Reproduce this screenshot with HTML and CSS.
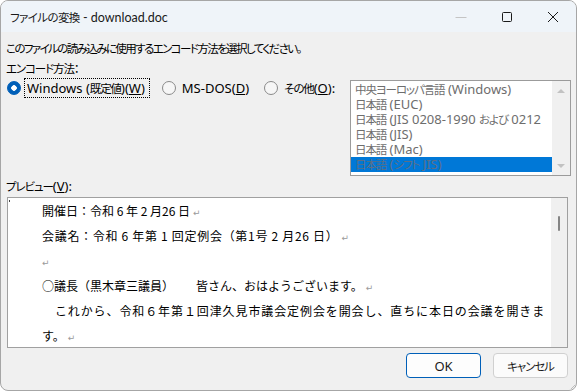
FILE: index.html
```html
<!DOCTYPE html>
<html lang="ja">
<head>
    <meta charset="UTF-8">
    <title>ファイルの変換 - download.doc</title>
    <link rel="stylesheet" href="styles.css">
</head>
<body>
    <div class="window">
        <div class="titlebar">
            <span class="title"><span class="ja">ファイルの変換</span> - download.doc</span>
            <div class="caption">
                <span class="cap-btn">
                    <svg width="12" height="12" viewBox="0 0 12 12"><path d="M0.5 6.5h11" stroke="#c4c4c4" stroke-width="1"/></svg>
                </span>
                <span class="cap-btn">
                    <svg width="12" height="12" viewBox="0 0 12 12"><rect x="1.5" y="1.5" width="9" height="9" rx="1" fill="none" stroke="#1a1a1a" stroke-width="1"/></svg>
                </span>
                <span class="cap-btn">
                    <svg width="12" height="12" viewBox="0 0 12 12"><path d="M1 1L11 11M11 1L1 11" stroke="#1a1a1a" stroke-width="1"/></svg>
                </span>
            </div>
        </div>

        <div class="content">
            <p class="line"><span class="ja intro">このファイルの読み込みに使用するエンコード方法を選択してください。</span></p>
            <p class="line"><span class="ja">エンコード方法：</span></p>

            <div class="encoding-row">
                <div class="radios">
                    <label class="radio">
                        <span class="radio-dot checked"></span>
                        <span class="radio-text focused">Windows (<span class="ja">既定値</span>)(<u>W</u>)</span>
                    </label>
                    <label class="radio">
                        <span class="radio-dot"></span>
                        <span class="radio-text">MS-DOS(<u>D</u>)</span>
                    </label>
                    <label class="radio">
                        <span class="radio-dot"></span>
                        <span class="radio-text"><span class="ja">その他</span>(<u>O</u>):</span>
                    </label>
                </div>

                <div class="listbox">
                    <ul class="list-items">
                        <li><span class="ja">中央ヨーロッパ言語</span> (Windows)</li>
                        <li><span class="ja">日本語</span> (EUC)</li>
                        <li><span class="ja">日本語</span> (JIS 0208-1990 <span class="ja">および</span> 0212</li>
                        <li><span class="ja">日本語</span> (JIS)</li>
                        <li><span class="ja">日本語</span> (Mac)</li>
                        <li class="selected"><span class="ja">日本語</span> (<span class="ja">シフト</span> JIS)</li>
                    </ul>
                    <div class="list-scroll">
                        <span class="arrow up"></span>
                        <span class="arrow down"></span>
                    </div>
                </div>
            </div>

            <p class="line"><span class="ja">プレビュー</span>(<u>V</u>):</p>

            <div class="preview">
                <div class="doc">
                    <span class="cursor-mark"></span>
                    <p class="doc-line">開催日：令和 6 年 2 月26 日<span class="ret">↵</span></p>
                    <p class="doc-line spaced">会議名：令和 6 年第 1 回定例会（第1号 2 月26 日）<span class="ret">↵</span></p>
                    <p class="doc-line"><span class="ret first">↵</span></p>
                    <p class="doc-line">○議長（黒木章三議員）<span class="speech">皆さん、おはようございます。</span><span class="ret">↵</span></p>
                    <p class="doc-line justified">　これから、令和６年第１回津久見市議会定例会を開会し、直ちに本日の会議を開きま</p>
                    <p class="doc-line">す。<span class="ret">↵</span></p>
                </div>
                <div class="doc-scroll">
                    <span class="thumb"></span>
                </div>
            </div>

            <div class="buttons">
                <button class="btn default">OK</button>
                <button class="btn"><span class="ja">キャンセル</span></button>
            </div>
        </div>

        <span class="grip"></span>
    </div>
</body>
</html>
```

FILE: styles.css
```css
body {
    margin: 0;
    background: #ffffff;
    font-family: "Noto Sans", "Noto Sans CJK JP", sans-serif;
    font-size: 13px;
    color: #000;
}

/* Japanese runs of the UI font are narrower than the Noto CJK defaults */
.ja {
    font-family: "Noto Sans CJK JP", sans-serif;
    font-size: 11.5px;
    letter-spacing: -1.1px;
    font-feature-settings: "palt";
}

.ja.intro {
    letter-spacing: -1.6px;
}

.window {
    position: relative;
    width: 577px;
    height: 391px;
    box-sizing: border-box;
    border: 1px solid #a6a6a6;
    border-radius: 8px;
    overflow: hidden;
    background: #f0f0f0;
    display: flex;
    flex-direction: column;
}

/* title bar */
.titlebar {
    height: 31px;
    flex-shrink: 0;
    background: #eff4f9;
    display: flex;
    align-items: center;
}

.title {
    flex: 1;
    padding-left: 9px;
    color: #1a1a1a;
    font-family: "Lato", "Noto Sans CJK JP", sans-serif;
    font-size: 12.5px;
}

.title .ja {
    letter-spacing: -0.6px;
}

.caption {
    display: flex;
    height: 100%;
}

.cap-btn {
    width: 46px;
    display: flex;
    align-items: center;
    justify-content: center;
}

/* dialog content */
.content {
    flex: 1;
    padding: 6px 5px 0 5px;
}

.line {
    margin: 0;
    height: 20px;
    line-height: 20px;
    white-space: nowrap;
}

.encoding-row {
    display: flex;
    justify-content: space-between;
    align-items: flex-start;
}

.radios {
    display: flex;
    align-items: center;
    height: 20px;
    gap: 12px;
    padding-left: 1px;
}

.radio {
    display: flex;
    align-items: center;
    gap: 3px;
}

.radio-dot {
    width: 12px;
    height: 12px;
    border-radius: 50%;
    border: 1px solid #8a8a8a;
    background: #f6f6f6;
}

.radio-dot.checked {
    border-color: #005fb8;
    background: radial-gradient(circle, #ffffff 0 2.5px, #005fb8 3px);
}

.radio-text {
    padding: 1px 2px;
    line-height: 16px;
    border: 1px solid transparent;
}

.radio-text.focused {
    border: 1px dotted #000;
    padding-right: 4px;
}

/* listbox */
.listbox {
    margin-top: 2px;
    width: 221px;
    height: 96px;
    box-sizing: border-box;
    border: 1px solid #9b9b9b;
    background: #fff;
    display: flex;
}

.list-items {
    flex: 1;
    min-width: 0;
    margin: 0;
    padding: 1px 0 0;
    list-style: none;
    color: #6d6d6d;
    overflow: hidden;
}

.list-items li {
    height: 15px;
    line-height: 15px;
    padding-left: 4px;
    white-space: nowrap;
}

.list-items li.selected {
    background: #0078d7;
    color: #5c6f86;
}

.list-scroll {
    width: 18px;
    background: #f0f0f0;
    display: flex;
    flex-direction: column;
    justify-content: space-between;
    align-items: center;
    padding: 8px 0 7px;
}

.arrow {
    width: 0;
    height: 0;
    border-left: 4px solid transparent;
    border-right: 4px solid transparent;
}

.arrow.up {
    border-bottom: 4px solid #c2c2c2;
}

.arrow.down {
    border-top: 4px solid #c2c2c2;
}

/* preview */
.preview {
    margin: 1px 3px 0 1px;
    height: 151px;
    box-sizing: border-box;
    border: 1px solid #a0a0a0;
    background: #fff;
    display: flex;
}

.doc {
    position: relative;
    flex: 1;
    padding-left: 34px;
    overflow: hidden;
    font-family: "Noto Sans CJK JP", sans-serif;
    font-size: 12px;
}

.cursor-mark {
    position: absolute;
    left: 1px;
    top: 2px;
    width: 1px;
    height: 2px;
    background: #444;
}

.doc-line {
    margin: 0;
    height: 25px;
    line-height: 25px;
    white-space: nowrap;
}

.doc-line.spaced {
    letter-spacing: 0.7px;
}

.doc-line.justified {
    letter-spacing: 0.9px;
}

.speech {
    margin-left: 22px;
}

.ret {
    color: #9a9a9a;
    font-family: "DejaVu Sans", sans-serif;
    font-size: 9px;
    margin-left: 3px;
}

.ret.first {
    margin-left: 0;
}

.doc-scroll {
    width: 16px;
    background: #f0f0f0;
    display: flex;
    justify-content: center;
    padding-top: 18px;
}

.thumb {
    width: 2px;
    height: 15px;
    background: #858585;
    border-radius: 1px;
}

/* buttons */
.buttons {
    display: flex;
    justify-content: flex-end;
    gap: 12px;
    margin-top: 5px;
    padding-right: 3px;
}

.btn {
    width: 75px;
    height: 25px;
    box-sizing: border-box;
    border: 1px solid #d0d0d0;
    border-radius: 4px;
    background: #fbfbfb;
    font-family: "Noto Sans", "Noto Sans CJK JP", sans-serif;
    font-size: 13px;
    color: #1a1a1a;
    padding: 0;
}

.btn.default {
    border-color: #005fb8;
    background: #fdfdfd;
}

.grip {
    position: absolute;
    right: 1px;
    bottom: 1px;
    width: 6px;
    height: 6px;
    background: linear-gradient(135deg, transparent 60%, #bdbdbd 60% 70%, transparent 70%);
}
```
